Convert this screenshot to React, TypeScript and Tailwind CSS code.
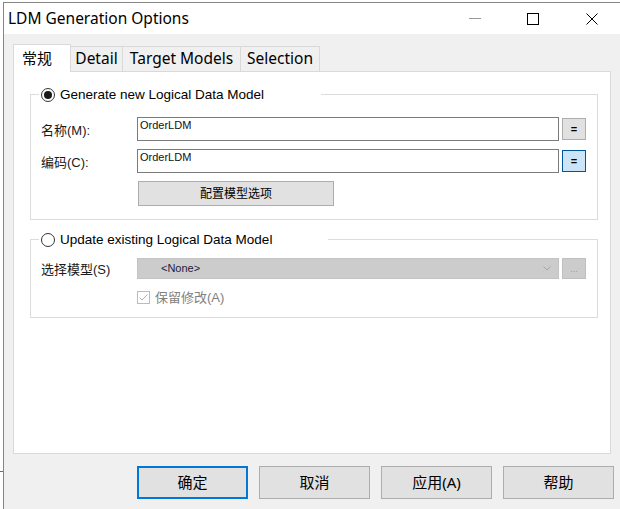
import React from 'react';

const ui = { fontFamily: '"Noto Sans", "Noto Sans CJK SC", sans-serif' };
const body = { fontFamily: '"Liberation Sans", "Noto Sans CJK SC", sans-serif' };

function Radio({ checked }: { checked?: boolean }) {
  return (
    <span className="w-[14px] h-[14px] rounded-full border border-[#333333] bg-white flex items-center justify-center shrink-0">
      {checked && <span className="w-[8px] h-[8px] rounded-full bg-[#1a1a1a]" />}
    </span>
  );
}

function Legend({ checked, label, width }: { checked?: boolean; label: string; width: string }) {
  return (
    <div className={`-mt-[9px] ml-[8px] h-[17px] bg-white pl-[2px] flex items-center ${width}`}>
      <Radio checked={checked} />
      <span className="ml-[5px] text-[13.5px] leading-[17px] text-black" style={body}>
        {label}
      </span>
    </div>
  );
}

function TextRow({ label, value, active }: { label: string; value: string; active?: boolean }) {
  return (
    <div className="flex items-start h-[24px]">
      <div className="w-[96px] pt-[6px] text-[13px] leading-[16px] text-[#1a1a1a]" style={body}>
        {label}
      </div>
      <div className="w-[422px] h-[24px] border border-[#7a7a7a] bg-white pl-[2px] pt-[1px] text-[11px] leading-[13px] text-[#111111]" style={body}>
        {value}
      </div>
      <div
        className={`ml-[3px] mt-[1px] w-[24px] h-[22px] flex items-center justify-center text-[11px] font-bold leading-none text-black ${
          active ? 'bg-[#cce4f7] border border-[#005499]' : 'bg-[#e1e1e1] border border-[#adadad]'
        }`}
        style={body}
      >
        =
      </div>
    </div>
  );
}

const tabs = [
  { label: 'Detail', w: 'w-[52px]' },
  { label: 'Target Models', w: 'w-[118px]' },
  { label: 'Selection', w: 'w-[79px]' },
];

const buttons = ['确定', '取消', '应用(A)', '帮助'];

export default function App() {
  return (
    <div className="w-[620px] h-[509px] overflow-hidden bg-white flex">
      <div className="w-[3px] shrink-0 flex flex-col">
        <div className="mt-[471px] h-px bg-[#2b8a8a]" />
      </div>
      <div className="flex-1 min-w-0 mt-[2px] border-l border-t border-[#858585] flex flex-col">
        {/* title bar */}
        <div className="h-[31px] bg-white flex items-center pl-[4px] pr-[22px]">
          <span className="text-[15.5px] leading-none text-black" style={ui}>
            LDM Generation Options
          </span>
          <div className="flex-1" />
          <div className="w-[12px] h-px bg-[#9a9a9a]" />
          <div className="ml-[46px] w-[12px] h-[12px] border border-black" />
          <svg className="ml-[47px]" width="12" height="12" viewBox="0 0 12 12">
            <path d="M0.5 0.5 L11.5 11.5 M11.5 0.5 L0.5 11.5" stroke="#000" strokeWidth="1" fill="none" />
          </svg>
        </div>

        {/* body */}
        <div className="flex-1 bg-[#f0f0f0] pl-[9px] pt-[10px]">
          <div className="flex items-end">
            <div
              className="relative z-10 -mb-px w-[58px] h-[28px] bg-white border-t border-l border-r border-[#d9d9d9] pl-[8px] flex items-center text-[15px] text-black"
              style={ui}
            >
              常规
            </div>
            {tabs.map((t) => (
              <div
                key={t.label}
                className={`${t.w} h-[25px] border-t border-r border-[#d9d9d9] flex items-center justify-center text-[15.5px] text-black`}
                style={ui}
              >
                {t.label}
              </div>
            ))}
          </div>

          <div className="w-[598px] h-[383px] border border-[#d9d9d9] bg-white pt-[22px] pl-[16px]">
            {/* group 1 */}
            <div className="w-[568px] h-[126px] border border-[#dcdcdc]">
              <Legend checked label="Generate new Logical Data Model" width="w-[282px]" />
              <div className="pl-[10px] mt-[14px]">
                <TextRow label="名称(M):" value="OrderLDM" />
                <div className="mt-[8px]">
                  <TextRow label="编码(C):" value="OrderLDM" active />
                </div>
                <div
                  className="mt-[8px] ml-[97px] w-[196px] h-[25px] bg-[#e1e1e1] border border-[#adadad] flex items-center justify-center text-[12px] text-black"
                  style={body}
                >
                  配置模型选项
                </div>
              </div>
            </div>

            {/* group 2 */}
            <div className="mt-[19px] w-[568px] h-[79px] border border-[#dcdcdc]">
              <Legend label="Update existing Logical Data Model" width="w-[289px]" />
              <div className="pl-[10px] mt-[10px]">
                <div className="flex items-center h-[21px]">
                  <div className="w-[96px] pt-[2px] text-[13px] leading-[16px] text-[#1a1a1a]" style={body}>
                    选择模型(S)
                  </div>
                  <div className="w-[422px] h-[21px] bg-[#cccccc] border border-[#c4c4c4] flex items-center pl-[23px] pr-[7px]">
                    <span className="flex-1 text-[11px] leading-none text-[#1c1c3c]" style={body}>
                      &lt;None&gt;
                    </span>
                    <svg width="8" height="5" viewBox="0 0 8 5">
                      <path d="M0.5 0.5 L4 4 L7.5 0.5" stroke="#a6a6a6" strokeWidth="1" fill="none" />
                    </svg>
                  </div>
                  <div
                    className="ml-[3px] w-[24px] h-[21px] bg-[#cccccc] border border-[#bfbfbf] flex items-end justify-center pb-[4px] text-[9px] leading-none text-[#9a9a9a]"
                    style={body}
                  >
                    ...
                  </div>
                </div>
                <div className="mt-[12px] ml-[96px] flex items-center h-[13px]">
                  <div className="w-[13px] h-[13px] border border-[#bcbcbc] bg-white flex items-center justify-center">
                    <svg width="11" height="11" viewBox="0 0 11 11">
                      <path d="M1.5 5.5 L4 8 L9.5 2.5" stroke="#b0b0b0" strokeWidth="1" fill="none" />
                    </svg>
                  </div>
                  <span className="ml-[5px] text-[13px] leading-[16px] text-[#808080]" style={body}>
                    保留修改(A)
                  </span>
                </div>
              </div>
            </div>
          </div>

          {/* dialog buttons */}
          <div className="mt-[12px] ml-[124px] flex gap-[11px]">
            {buttons.map((b, i) => (
              <div
                key={b}
                className={`w-[111px] h-[33px] bg-[#e1e1e1] flex items-center justify-center text-[15px] text-black ${
                  i === 0 ? 'border-2 border-[#0078d7]' : 'border border-[#adadad]'
                }`}
                style={ui}
              >
                {b}
              </div>
            ))}
          </div>
        </div>
      </div>
    </div>
  );
}
